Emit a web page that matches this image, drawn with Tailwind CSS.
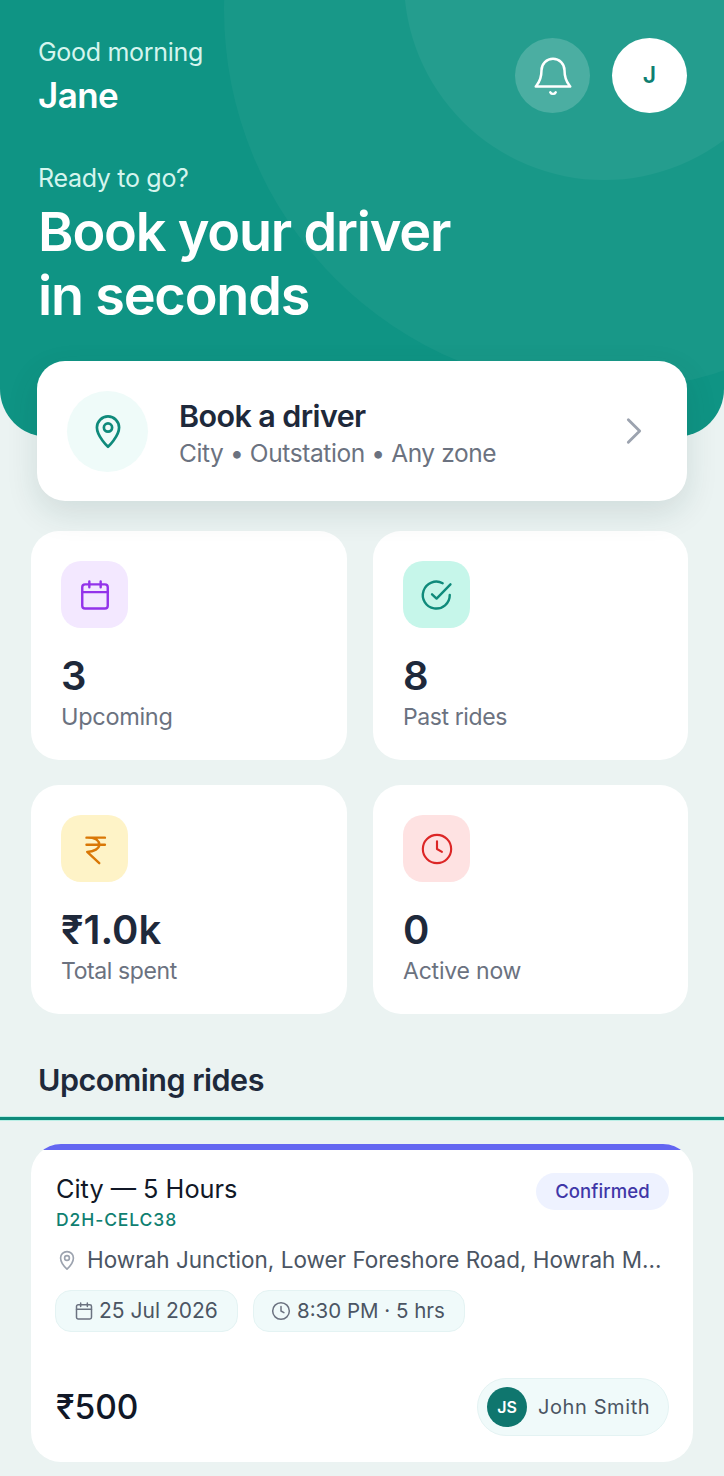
<!DOCTYPE html>
<html lang="en">
<head>
    <meta charset="UTF-8">
    <meta name="viewport" content="width=device-width, initial-scale=1.0">
    <title>Home</title>
    <script src="https://cdn.jsdelivr.net/npm/@tailwindcss/browser@4"></script>
</head>
<body class="bg-[#ebf3f2] font-['Inter',sans-serif] text-[#1e293b] h-[1476px] overflow-hidden">
    <!-- Hero -->
    <header class="relative h-[437px] overflow-hidden rounded-b-[48px] bg-[#0f9484] text-white">
        <div class="absolute left-[224px] top-[-370px] h-[760px] w-[760px] rounded-full bg-white/4"></div>
        <div class="absolute left-[404px] top-[-220px] h-[400px] w-[400px] rounded-full bg-white/5"></div>
        <div class="relative flex items-start justify-between pl-[38px] pr-[37px] pt-[38px]">
            <div>
                <p class="text-[25px] leading-[28px] tracking-[-0.3px] text-[#d5f5ee]">Good morning</p>
                <p class="mt-[7px] text-[35px] leading-[44px] font-semibold tracking-[-0.6px]">Jane</p>
            </div>
            <div class="flex gap-[22px]">
                <button class="flex h-[75px] w-[75px] items-center justify-center rounded-full bg-white/18">
                    <svg width="46" height="46" viewBox="0 0 24 24" fill="none" stroke="white" stroke-width="1.3" stroke-linecap="round" stroke-linejoin="round">
                        <path d="M6 9a6 6 0 0 1 12 0c0 6 2.6 7.6 3 8.5H3c.4-.9 3-2.5 3-8.5Z"/>
                        <path d="M10.6 20.5a1.6 1.6 0 0 0 2.8 0"/>
                    </svg>
                </button>
                <div class="flex h-[75px] w-[75px] items-center justify-center rounded-full bg-white text-[23px] font-semibold text-[#0f7f71]">J</div>
            </div>
        </div>
        <div class="relative pl-[38px] pt-[46px]">
            <p class="text-[25px] leading-[30px] tracking-[-0.3px] text-[#d5f5ee]">Ready to go?</p>
            <h1 class="mt-[7px] text-[54px] leading-[64px] font-semibold tracking-[-1.2px]">Book your driver<br>in seconds</h1>
        </div>
    </header>

    <!-- Book a driver -->
    <a class="relative mx-[37px] -mt-[76px] flex h-[140px] items-center rounded-[28px] bg-white pl-[30px] pr-[36px] shadow-[0_12px_32px_rgba(15,60,55,0.12)]">
        <div class="flex h-[81px] w-[81px] shrink-0 items-center justify-center rounded-full bg-[#effbf9]">
            <svg width="38" height="38" viewBox="0 0 24 24" fill="none" stroke="#0f8a7b" stroke-width="1.7" stroke-linecap="round" stroke-linejoin="round">
                <path d="M12 22s7-6.6 7-12.2A7 7 0 0 0 5 9.8C5 15.4 12 22 12 22Z"/>
                <circle cx="12" cy="9.8" r="2.6"/>
            </svg>
        </div>
        <div class="ml-[31px] flex-1 pt-[4px]">
            <p class="text-[30.5px] leading-[36px] font-semibold tracking-[-0.6px]">Book a driver</p>
            <p class="mt-[3px] text-[24.5px] leading-[32px] tracking-[-0.4px] text-[#6b7280]">City • Outstation • Any zone</p>
        </div>
        <svg width="34" height="34" viewBox="0 0 24 24" fill="none" stroke="#9ca3af" stroke-width="2" stroke-linecap="round" stroke-linejoin="round"><path d="m8 4 8 8-8 8"/></svg>
    </a>

    <!-- Stats -->
    <section class="ml-[31px] mt-[30px] grid grid-cols-[316px_315px] gap-x-[26px] gap-y-[25px]">
        <div class="h-[229px] rounded-[28px] bg-white pl-[30px] pt-[30px]">
            <div class="flex h-[67px] w-[67px] items-center justify-center rounded-[20px] bg-[#f3e8ff]">
                <svg width="34" height="34" viewBox="0 0 24 24" fill="none" stroke="#9333ea" stroke-width="1.7" stroke-linecap="round" stroke-linejoin="round">
                    <rect x="3" y="4.5" width="18" height="17" rx="2"/><path d="M8 2.5v4M16 2.5v4M3 10h18"/>
                </svg>
            </div>
            <p class="mt-[25px] text-[40px] leading-[46px] font-semibold">3</p>
            <p class="mt-[2px] text-[23.5px] leading-[32px] tracking-[-0.3px] text-[#6b7280]">Upcoming</p>
        </div>
        <div class="h-[229px] rounded-[28px] bg-white pl-[30px] pt-[30px]">
            <div class="flex h-[67px] w-[67px] items-center justify-center rounded-[20px] bg-[#c6f6ea]">
                <svg width="34" height="34" viewBox="0 0 24 24" fill="none" stroke="#0f8a7b" stroke-width="1.7" stroke-linecap="round" stroke-linejoin="round">
                    <path d="M21 12a9.5 9.5 0 1 1-5-8.3"/><path d="m8.5 11.5 3.2 3L21.5 4.5"/>
                </svg>
            </div>
            <p class="mt-[25px] text-[40px] leading-[46px] font-semibold">8</p>
            <p class="mt-[2px] text-[23px] leading-[32px] tracking-[-0.4px] text-[#6b7280]">Past rides</p>
        </div>
        <div class="h-[229px] rounded-[28px] bg-white pl-[30px] pt-[30px]">
            <div class="flex h-[67px] w-[67px] items-center justify-center rounded-[20px] bg-[#fef3c7]">
                <svg width="34" height="34" viewBox="0 0 24 24" fill="none" stroke="#d97706" stroke-width="1.7" stroke-linecap="round" stroke-linejoin="round">
                    <path d="M6 4h13M6 9h13M6.5 4c7 0 8.5 2.5 8.5 5s-3.5 5-8.5 5l8.5 8"/>
                </svg>
            </div>
            <p class="mt-[25px] text-[40px] leading-[46px] font-semibold">₹1.0k</p>
            <p class="mt-[2px] text-[23px] leading-[32px] tracking-[-0.4px] text-[#6b7280]">Total spent</p>
        </div>
        <div class="h-[229px] rounded-[28px] bg-white pl-[30px] pt-[30px]">
            <div class="flex h-[67px] w-[67px] items-center justify-center rounded-[20px] bg-[#fee2e2]">
                <svg width="34" height="34" viewBox="0 0 24 24" fill="none" stroke="#dc2626" stroke-width="1.5" stroke-linecap="round" stroke-linejoin="round">
                    <circle cx="12" cy="12" r="10"/><path d="M12 6.5V12l3.5 2"/>
                </svg>
            </div>
            <p class="mt-[25px] text-[40px] leading-[46px] font-semibold">0</p>
            <p class="mt-[2px] text-[23px] leading-[32px] tracking-[-0.2px] text-[#6b7280]">Active now</p>
        </div>
    </section>

    <!-- Upcoming rides -->
    <h2 class="ml-[38px] mt-[46px] text-[30.5px] leading-[40px] font-semibold tracking-[-0.5px]">Upcoming rides</h2>
    <div class="mt-[17px] h-[3px] bg-[#0f8a7b] shadow-[0_0_0_1px_#b9efe6]"></div>

    <article class="ml-[31px] mt-[24px] h-[318px] w-[662px] overflow-hidden rounded-[30px] bg-white">
        <div class="h-[6px] bg-[#6366f1]"></div>
        <div class="pl-[25px] pr-[24px]">
            <div class="flex items-start justify-between pt-[23px]">
                <div>
                    <p class="text-[25.3px] leading-[32px] font-normal text-[#111827]">City — 5 Hours</p>
                    <p class="mt-[3px] text-[17.5px] leading-[24px] font-medium tracking-[0.9px] text-[#0f7f71]">D2H-CELC38</p>
                </div>
                <span class="flex h-[37px] w-[133px] items-center justify-center rounded-full bg-[#eef2ff] text-[18.5px] font-medium tracking-[0.1px] text-[#3f37a8]">Confirmed</span>
            </div>
            <div class="mt-[13px] flex items-center">
                <svg class="shrink-0" width="22" height="22" viewBox="0 0 24 24" fill="none" stroke="#9ca3af" stroke-width="1.8" stroke-linecap="round" stroke-linejoin="round">
                    <path d="M12 22s7-6.6 7-12.2A7 7 0 0 0 5 9.8C5 15.4 12 22 12 22Z"/><circle cx="12" cy="9.8" r="2.6"/>
                </svg>
                <p class="ml-[9px] truncate text-[22.5px] leading-[30px] text-[#4b5563]">Howrah Junction, Lower Foreshore Road, Howrah M...</p>
            </div>
            <div class="-ml-[1px] mt-[15px] flex gap-[15px]">
                <span class="flex h-[42px] w-[183px] items-center gap-[5px] rounded-[16px] border border-[#e4f3f3] bg-[#f0fafa] pl-[18px] text-[21px] text-[#4b5563]">
                    <svg width="20" height="20" viewBox="0 0 24 24" fill="none" stroke="#6b7280" stroke-width="1.8" stroke-linecap="round" stroke-linejoin="round"><rect x="3" y="4.5" width="18" height="17" rx="2"/><path d="M8 2.5v4M16 2.5v4M3 10h18"/></svg>
                    25 Jul 2026
                </span>
                <span class="flex h-[42px] w-[212px] items-center gap-[6px] rounded-[16px] border border-[#e4f3f3] bg-[#f0fafa] pl-[17px] text-[20.5px] text-[#4b5563]">
                    <svg width="20" height="20" viewBox="0 0 24 24" fill="none" stroke="#6b7280" stroke-width="1.8" stroke-linecap="round" stroke-linejoin="round"><circle cx="12" cy="12" r="10"/><path d="M12 6.5V12l3.5 2"/></svg>
                    8:30 PM · 5 hrs
                </span>
            </div>
            <div class="mt-[46px] flex items-center justify-between">
                <p class="text-[33.5px] leading-[40px] font-medium text-[#111827]">₹500</p>
                <div class="flex h-[58px] w-[192px] items-center gap-[11px] rounded-full border border-[#e4f3f3] bg-[#f0fafa] pl-[9px]">
                    <span class="flex h-[40px] w-[40px] items-center justify-center rounded-full bg-[#0f766e] text-[16px] font-semibold text-white">JS</span>
                    <span class="text-[20px] tracking-[0.6px] text-[#4b5563]">John Smith</span>
                </div>
            </div>
        </div>
    </article>
</body>
</html>
